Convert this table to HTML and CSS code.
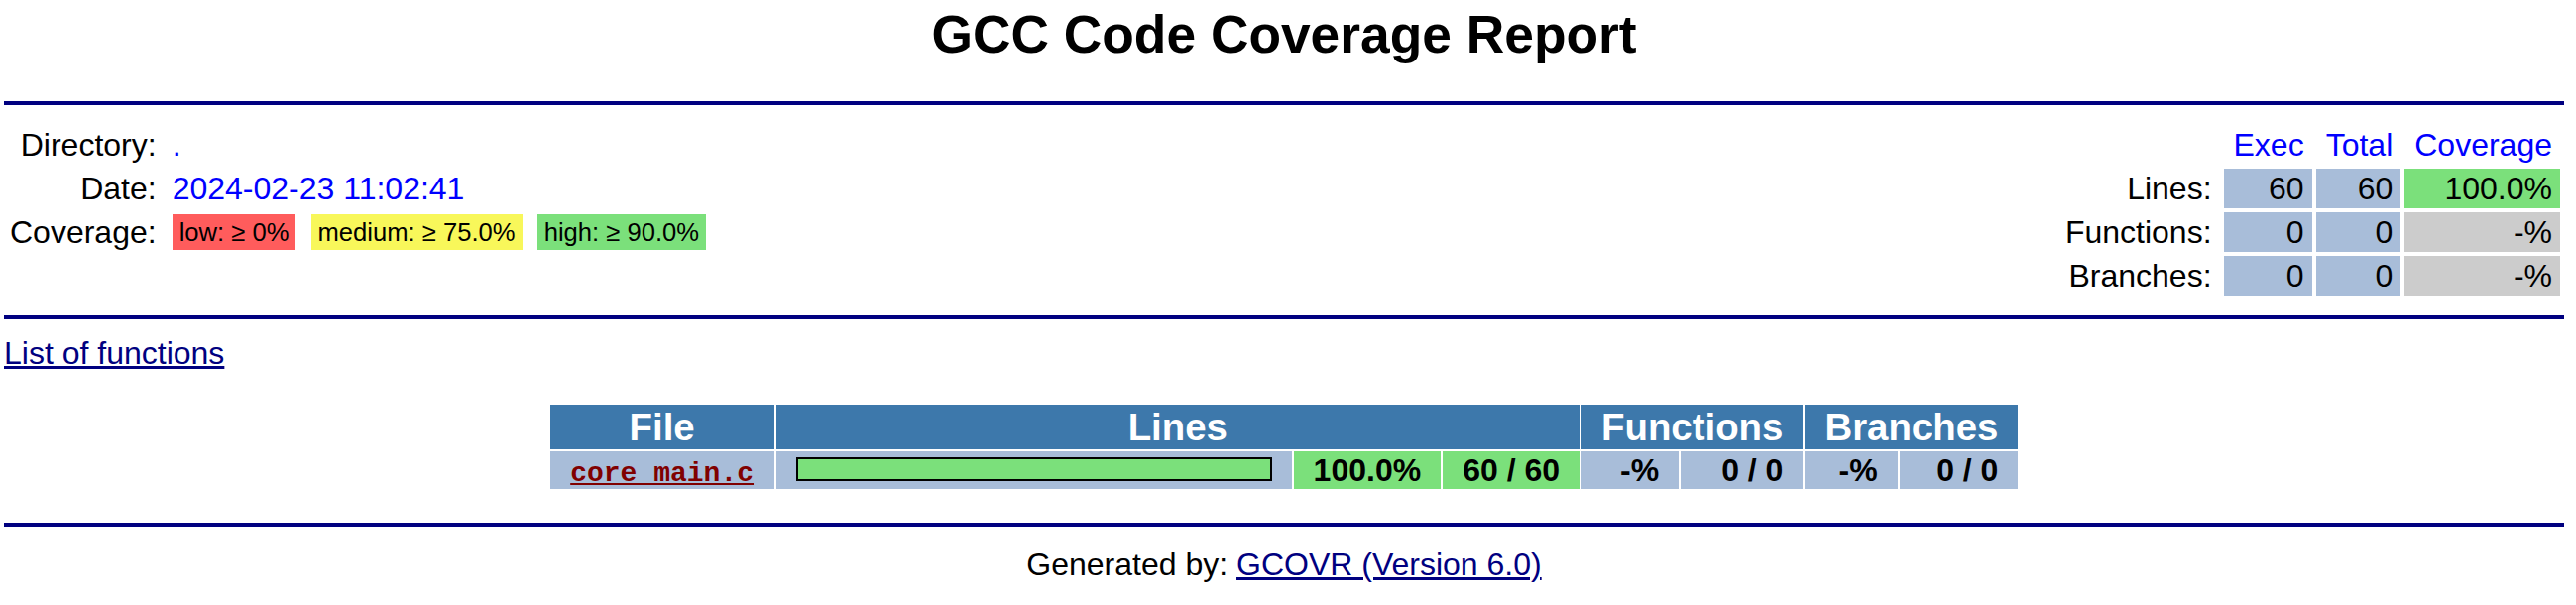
FILE: index.html
```html
<!DOCTYPE html>
<html lang="en">
<head>
<meta charset="utf-8">
<title>GCC Code Coverage Report</title>
<link rel="stylesheet" href="styles.css">
</head>
<body>
<h1 class="title">GCC Code Coverage Report</h1>
<hr class="rule rule-top">
<div class="summary">
  <table class="legend">
    <tr><th scope="row">Directory:</th><td>.</td></tr>
    <tr><th scope="row">Date:</th><td>2024-02-23 11:02:41</td></tr>
    <tr><th scope="row">Coverage:</th><td class="legend-cell"><span class="chip coverage-low">low: &ge; 0%</span> <span class="chip coverage-medium">medium: &ge; 75.0%</span> <span class="chip coverage-high">high: &ge; 90.0%</span></td></tr>
  </table>
  <table class="coverage">
    <tr><th></th><th scope="col">Exec</th><th scope="col">Total</th><th scope="col">Coverage</th></tr>
    <tr><th scope="row">Lines:</th><td>60</td><td>60</td><td class="coverage-high">100.0%</td></tr>
    <tr><th scope="row">Functions:</th><td>0</td><td>0</td><td class="coverage-unknown">-%</td></tr>
    <tr><th scope="row">Branches:</th><td>0</td><td>0</td><td class="coverage-unknown">-%</td></tr>
  </table>
</div>
<hr class="rule">
<div class="func-link"><a class="nav-link" href="#functions">List of functions</a></div>
<table class="file-list">
  <tr>
    <th class="hdr">File</th>
    <th class="hdr" colspan="3">Lines</th>
    <th class="hdr" colspan="2">Functions</th>
    <th class="hdr" colspan="2">Branches</th>
  </tr>
  <tr>
    <td class="c-file"><a class="file-link" href="#core_main">core_main.c</a></td>
    <td class="c-bar"><span class="meter"></span></td>
    <td class="c-pct cell-high">100.0%</td>
    <td class="c-lines cell-high">60 / 60</td>
    <td class="c-fpct">-%</td>
    <td class="c-fcount">0 / 0</td>
    <td class="c-bpct">-%</td>
    <td class="c-bcount">0 / 0</td>
  </tr>
</table>
<hr class="rule rule-bottom">
<div class="footer">Generated by: <a class="nav-link" href="#gcovr">GCOVR (Version 6.0)</a></div>
</body>
</html>
```
FILE: styles.css
```css
html, body {
  background: #ffffff;
}
body {
  margin: 0;
  padding: 4px 12px 0 4px;
  color: #000000;
  font-family: "Liberation Sans", Arial, Helvetica, sans-serif;
  font-size: 32px;
}

.title {
  margin: 0;
  padding-bottom: 20px;
  text-align: center;
  font-size: 53.33px;
  line-height: 62px;
  font-weight: bold;
}

.rule {
  height: 4px;
  border: 0;
  margin: 16px 0;
  background-color: #000080;
}

.summary {
  display: flex;
  justify-content: space-between;
  align-items: flex-start;
}

.legend {
  border-spacing: 4px;
  color: #000;
}
.legend th {
  font-weight: normal;
  text-align: right;
  white-space: nowrap;
  padding: 2px;
  line-height: 36px;
}
.legend td {
  color: #0000ff;
  text-align: left;
  white-space: nowrap;
  padding: 2px 2px 2px 10px;
  line-height: 36px;
}
.legend td.legend-cell {
  color: #000;
  font-size: 25.6px;
}
.chip {
  margin-right: 8px;
  padding: 4px 7px;
}
.coverage-low { background-color: #ff5c5c; }
.coverage-medium { background-color: #f8f75a; }
.coverage-high { background-color: #7be07b; }

.coverage {
  border-spacing: 4px;
}
.coverage th,
.coverage td {
  text-align: right;
  color: #000;
  font-weight: normal;
  white-space: nowrap;
  padding: 2px 8px 2px 10px;
  line-height: 36px;
}
.coverage th[scope=col] {
  color: #0000ff;
}
.coverage td {
  background-color: #a8bdd9;
}
.coverage td.coverage-high { background-color: #7be07b; }
.coverage td.coverage-unknown { background-color: #cccccc; }

.func-link {
  line-height: 36px;
}
.nav-link {
  color: #000080;
  text-decoration: underline;
}

.file-list {
  margin: 32px auto;
  border-spacing: 2px;
}
.file-list th.hdr {
  color: #ffffff;
  background-color: #3d78ab;
  font-size: 38.4px;
  font-weight: bold;
  line-height: 45px;
  padding: 0 20px;
  text-align: center;
  white-space: nowrap;
}
.file-list td {
  background-color: #a8bdd9;
  font-weight: bold;
  line-height: 38px;
  padding: 0 20px;
  text-align: right;
  white-space: nowrap;
}
.file-list td.cell-high { background-color: #7be07b; }
.c-file { width: 186px; text-align: center !important; }
.c-bar { width: 480px; text-align: left !important; }
.c-pct { width: 108px; }
.c-lines { width: 96px; }
.c-fpct { width: 58px; }
.c-fcount { width: 83px; }
.c-bpct { width: 52px; }
.c-bcount { width: 78px; }

.file-link {
  color: #800000;
  text-decoration: underline;
  font-family: "Liberation Mono", "Courier New", monospace;
  font-size: 28px;
  line-height: 1;
  font-weight: bold;
}

.meter {
  display: inline-block;
  box-sizing: border-box;
  width: 480px;
  height: 24px;
  border: 2px solid #000;
  background-color: #7be07b;
  vertical-align: baseline;
}

.footer {
  text-align: center;
  padding-top: 4px;
  line-height: 36px;
}
```
